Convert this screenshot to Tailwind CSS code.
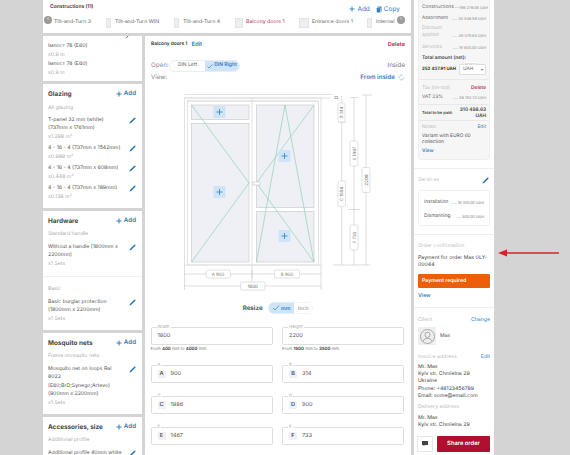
<!DOCTYPE html>
<html>
<head>
<meta charset="utf-8">
<script src="https://cdn.jsdelivr.net/npm/@tailwindcss/browser@4"></script>
</head>
<body class="m-0">
<div class="relative flex w-[570px] h-[455px] overflow-hidden bg-[#d4d4d4] font-['Inter',sans-serif] text-[#555] [text-rendering:geometricPrecision]">
  <!-- middle block -->
  <div class="ml-[43px] w-[368px] h-full flex flex-col gap-[3px] shrink-0">
    <!-- constructions bar -->
    <div class="relative h-[33px] shrink-0 bg-white">
      <div class="flex items-start justify-between pl-[7px] pr-[11px] pt-[4px] h-[17px]">
        <span class="text-[5px] leading-[6px] font-semibold text-[#333]">Constructions (11)</span>
        <div class="flex items-center gap-[6px] mt-[1px] text-[6.5px] leading-[8px] text-[#2f7fbf]">
          <span class="flex items-center gap-[2px]"><svg width="6" height="6" viewBox="0 0 6 6"><path d="M3 .5v5M.5 3h5" stroke="#2f7fbf" stroke-width=".9"/></svg>Add</span>
          <span class="flex items-center gap-[2px]"><svg width="6" height="7" viewBox="0 0 6 7"><rect x="1.5" y="0.5" width="4" height="5" rx=".6" fill="#2f7fbf"/><rect x=".5" y="1.7" width="4" height="5" rx=".6" fill="#2f7fbf" stroke="#fff" stroke-width=".5"/></svg>Copy</span>
        </div>
      </div>
      <div class="flex items-center h-[12px] pl-[11px] text-[5.2px] text-[#666] whitespace-nowrap overflow-hidden w-[364px]">
        <span class="w-[36px] shrink-0">Tilt-and-Turn 3</span>
        <span class="ml-[16px] w-[5px] h-[10px] shrink-0 bg-[#eceef2] border border-[#e2e4e8]"></span>
        <span class="ml-[4px] w-[43px] shrink-0">Tilt-and-Turn WIN</span>
        <span class="ml-[16px] w-[5px] h-[10px] shrink-0 bg-[#eceef2] border border-[#e2e4e8]"></span>
        <span class="ml-[4px] w-[36px] shrink-0">Tilt-and-Turn 4</span>
        <span class="ml-[16px] w-[8px] h-[10px] shrink-0 bg-[#eceef2] border border-[#e2e4e8]"></span>
        <span class="ml-[3px] w-[37px] shrink-0 text-[#b5304f]">Balcony doors 1</span>
        <span class="ml-[16px] w-[10px] h-[10px] shrink-0 bg-[#eceef2] border border-[#e2e4e8]"></span>
        <span class="ml-[3px] w-[40px] shrink-0">Entrance doors 1</span>
        <span class="ml-[15px] w-[5px] h-[10px] shrink-0 bg-[#eceef2] border border-[#e2e4e8]"></span>
        <span class="ml-[4px] shrink-0">Internal</span>
      </div>
      <span class="absolute left-[1px] top-[16px] w-[8px] h-[8px] rounded-full bg-[#9a9a9a] text-white text-[5px] flex items-center justify-center">‹</span>
      <span class="absolute left-[354px] top-[16px] w-[8px] h-[8px] rounded-full bg-[#9a9a9a] text-white text-[5px] flex items-center justify-center">›</span>
    </div>
    <div class="flex gap-[3px] flex-1 min-h-0">
      <!-- left column -->
      <div class="w-[99px] shrink-0 flex flex-col gap-[3px] text-[5.2px] leading-[8.5px] overflow-hidden">
        <div class="h-[45px] shrink-0 bg-white px-[5px] pt-[6px] relative">
          <svg class="absolute right-[11px] top-[-3px]" width="6" height="6" viewBox="0 0 6 6"><path d="M5.5 1 1.5 5 .5 5.5 1 4.500 5 .5z" fill="#1f6fb2"/></svg>
          <div>Імпост 78 (E60)</div>
          <div class="text-[#aaa]">x0.9 m</div>
          <div class="mt-[1px]">Імпост 78 (E60)</div>
          <div class="text-[#aaa]">x0.9 m</div>
        </div>

        <div class="h-[124px] shrink-0 bg-white px-[5px] pt-[5px]">
          <div class="flex items-center justify-between h-[10px] pr-[1px]">
            <span class="text-[6.4px] font-bold text-[#444]">Glazing</span>
            <span class="flex items-center gap-[2px] text-[6.2px] font-semibold text-[#2f7fbf]"><svg width="6" height="6" viewBox="0 0 6 6"><path d="M3 .5v5M.5 3h5" stroke="#2f7fbf" stroke-width="1"/></svg>Add</span>
          </div>
          <div class="mt-[5px] text-[#aaa]">All glazing</div>
          <div class="mt-[3px] flex justify-between"><div>T-panel 32 mm (white)<br>(737mm x 1761mm)<br><span class="text-[#aaa]">x1.298 m²</span></div><svg class="mt-[1px] mr-[1px] shrink-0" width="7" height="7" viewBox="0 0 7 7"><path d="M6.300 1.700 2 6 .5 6.500 1 5 5.300.7q.5-.3 1 0t0 1z" fill="#1f6fb2"/></svg></div>
          <div class="mt-[3px] flex justify-between"><div>4 - 16 - 4 (737mm x 1542mm)<br><span class="text-[#aaa]">x0.989 m²</span></div><svg class="mt-[1px] mr-[1px] shrink-0" width="7" height="7" viewBox="0 0 7 7"><path d="M6.300 1.700 2 6 .5 6.500 1 5 5.300.7q.5-.3 1 0t0 1z" fill="#1f6fb2"/></svg></div>
          <div class="mt-[3px] flex justify-between"><div>4 - 16 - 4 (737mm x 608mm)<br><span class="text-[#aaa]">x0.448 m²</span></div><svg class="mt-[1px] mr-[1px] shrink-0" width="7" height="7" viewBox="0 0 7 7"><path d="M6.300 1.700 2 6 .5 6.500 1 5 5.300.7q.5-.3 1 0t0 1z" fill="#1f6fb2"/></svg></div>
          <div class="mt-[3px] flex justify-between"><div>4 - 16 - 4 (737mm x 189mm)<br><span class="text-[#aaa]">x0.139 m²</span></div><svg class="mt-[1px] mr-[1px] shrink-0" width="7" height="7" viewBox="0 0 7 7"><path d="M6.300 1.700 2 6 .5 6.500 1 5 5.300.7q.5-.3 1 0t0 1z" fill="#1f6fb2"/></svg></div>
        </div>

        <div class="h-[119px] shrink-0 bg-white px-[5px] pt-[5px]">
          <div class="flex items-center justify-between h-[10px] pr-[1px]">
            <span class="text-[6.4px] font-bold text-[#444]">Hardware</span>
            <span class="flex items-center gap-[2px] text-[6.2px] font-semibold text-[#2f7fbf]"><svg width="6" height="6" viewBox="0 0 6 6"><path d="M3 .5v5M.5 3h5" stroke="#2f7fbf" stroke-width="1"/></svg>Add</span>
          </div>
          <div class="mt-[4px] text-[#aaa]">Standard handle</div>
          <div class="mt-[4px] flex justify-between"><div class="whitespace-nowrap">Without a handle (1800mm x<br>2200mm)<br><span class="text-[#aaa]">x1 Sets</span></div><svg class="mt-[1px] mr-[1px] shrink-0" width="7" height="7" viewBox="0 0 7 7"><path d="M6.300 1.700 2 6 .5 6.500 1 5 5.300.7q.5-.3 1 0t0 1z" fill="#1f6fb2"/></svg></div>
          <div class="-mx-[5px] h-px bg-[#f1f1f1] mt-[8px]"></div>
          <div class="mt-[8px] text-[#aaa]">Basic</div>
          <div class="mt-[4px] flex justify-between"><div class="whitespace-nowrap">Basic burglar protection<br>(1800mm x 2200mm)<br><span class="text-[#aaa]">x1 Sets</span></div><svg class="mt-[1px] mr-[1px] shrink-0" width="7" height="7" viewBox="0 0 7 7"><path d="M6.300 1.700 2 6 .5 6.500 1 5 5.300.7q.5-.3 1 0t0 1z" fill="#1f6fb2"/></svg></div>
        </div>

        <div class="h-[81px] shrink-0 bg-white px-[5px] pt-[5px]">
          <div class="flex items-center justify-between h-[10px] pr-[1px]">
            <span class="text-[6.4px] font-bold text-[#444]">Mosquito nets</span>
            <span class="flex items-center gap-[2px] text-[6.2px] font-semibold text-[#2f7fbf]"><svg width="6" height="6" viewBox="0 0 6 6"><path d="M3 .5v5M.5 3h5" stroke="#2f7fbf" stroke-width="1"/></svg>Add</span>
          </div>
          <div class="mt-[4px] text-[#aaa]">Frame mosquito nets</div>
          <div class="mt-[4px] flex justify-between"><div class="whitespace-nowrap">Mosquito net on loops Ral<br>8022<br>(E60;BrD;Synego;Artevo)<br>(900mm x 2200mm)<br><span class="text-[#aaa]">x1 Sets</span></div><svg class="mt-[1px] mr-[1px] shrink-0" width="7" height="7" viewBox="0 0 7 7"><path d="M6.300 1.700 2 6 .5 6.500 1 5 5.300.7q.5-.3 1 0t0 1z" fill="#1f6fb2"/></svg></div>
        </div>

        <div class="h-[60px] shrink-0 bg-white px-[5px] pt-[5px]">
          <div class="flex items-center justify-between h-[10px] pr-[1px]">
            <span class="text-[6.4px] font-bold text-[#444]">Accessories, size</span>
            <span class="flex items-center gap-[2px] text-[6.2px] font-semibold text-[#2f7fbf]"><svg width="6" height="6" viewBox="0 0 6 6"><path d="M3 .5v5M.5 3h5" stroke="#2f7fbf" stroke-width="1"/></svg>Add</span>
          </div>
          <div class="mt-[4px] text-[#aaa]">Additional profile</div>
          <div class="mt-[4px] flex justify-between"><div class="whitespace-nowrap">Additional profile 40mm white</div><svg class="mt-[1px] mr-[1px] shrink-0" width="7" height="7" viewBox="0 0 7 7"><path d="M6.300 1.700 2 6 .5 6.500 1 5 5.300.7q.5-.3 1 0t0 1z" fill="#1f6fb2"/></svg></div>
        </div>
      </div>

      <!-- main panel -->
      <div class="flex-1 min-w-0 bg-white">
        <div class="flex items-center justify-between h-[18px] px-[6px]">
          <span class="flex items-center gap-[4px] text-[4.8px] font-semibold text-[#333]">Balcony doors 1 <span class="text-[5.8px] font-semibold text-[#2f7fbf]">Edit</span></span>
          <span class="text-[5.6px] font-semibold text-[#b5304f]">Delete</span>
        </div>
        <div class="flex items-center justify-between h-[12px] mt-[6px] px-[6px] text-[6.2px] text-[#888]">
          <span class="flex items-center gap-[2px]"><span class="w-[16px]">Open:</span>
            <span class="flex h-[12px] w-[71px] rounded-full border border-[#e8eef4] text-[5px]">
              <span class="w-[35px] flex items-center justify-center text-[#666]">DIN Left</span>
              <span class="flex-1 rounded-r-full bg-[#cfe4f7] flex items-center justify-center gap-[1px] text-[#2f7fbf] font-semibold"><svg width="6" height="5" viewBox="0 0 6 5"><path d="M.5 2.500 2 4 5.500.5" fill="none" stroke="#2f7fbf" stroke-width=".7"/></svg>DIN Right</span>
            </span>
          </span>
          <span class="text-[#777]">Inside</span>
        </div>
        <div class="flex items-center justify-between h-[12px] px-[6px] text-[6.2px] text-[#888]">
          <span>View:</span>
          <span class="flex items-center gap-[3px] text-[#2f7fbf] font-semibold">From inside <svg width="7" height="7" viewBox="0 0 7 7"><path d="M6 3.500A2.500 2.500 0 1 1 5 1.500" fill="none" stroke="#7fb2d9" stroke-width=".6"/></svg></span>
        </div>

        <svg class="block" width="266" height="236" viewBox="145 84 266 236" font-family="Inter,sans-serif" text-rendering="geometricPrecision">
          <g fill="none" stroke="#d6d6d6" stroke-width=".7">
            <path d="M184.500 94.500H333M184.500 98H330M187.500 101H318.500M252 98v192"/>
            <rect x="184.500" y="98" width="136.500" height="167"/>
            <rect x="187.500" y="101" width="131" height="164"/>
          </g>
          <g fill="#eef0f6" stroke="#cccccc" stroke-width=".7">
            <rect x="191.500" y="105" width="57.500" height="14.500"/>
            <rect x="191.500" y="123.500" width="57.500" height="138.500"/>
            <rect x="256.500" y="105" width="57.500" height="102.500"/>
            <rect x="256.500" y="211.500" width="57.500" height="50.500"/>
          </g>
          <g fill="none" stroke="#8fd1b3" stroke-width=".7">
            <path d="M191.500 105 249 183 191.500 262"/>
            <path d="M314 105 256.500 183 314 262"/>
            <path d="M256.500 262 285 105 314 262"/>
          </g>
          <rect x="253" y="182" width="7" height="3" fill="#fff" stroke="#bbb" stroke-width=".5"/>
          <g fill="#cfe4f7">
            <rect x="213.500" y="106" width="12" height="12" rx="1"/>
            <rect x="213.500" y="186" width="12" height="12" rx="1"/>
            <rect x="278.500" y="150" width="12" height="12" rx="1"/>
            <rect x="278.500" y="230" width="12" height="12" rx="1"/>
          </g>
          <g stroke="#2f7fbf" stroke-width=".8">
            <path d="M216.500 112h6M219.500 109v6M216.500 192h6M219.500 189v6M281.500 156h6M284.500 153v6M281.500 236h6M284.500 233v6"/>
          </g>
          <g fill="none" stroke="#c8c8c8" stroke-width=".6">
            <path d="M341.700 96V265M354 97V265M366 95V265M333 265H370M348 209.500H360M338 122H346M350 97.500H358M362 95H372"/>
            <path d="M184.500 265V290M321 265V290M184.500 274H321M184.500 286H321M252 270V278"/>
          </g>
          <g fill="#fff" stroke="#cfcfcf" stroke-width=".6">
            <rect x="338" y="103" width="7" height="19" rx="1.500"/>
            <rect x="338" y="181" width="7.500" height="25.500" rx="1.500"/>
            <rect x="350" y="141" width="8" height="25" rx="1.500"/>
            <rect x="350" y="225" width="8" height="25" rx="1.500"/>
            <rect x="362" y="167.500" width="8" height="25" rx="1.500"/>
            <rect x="206" y="270" width="24.500" height="8" rx="1.500"/>
            <rect x="274.500" y="270" width="25" height="8" rx="1.500"/>
            <rect x="240.500" y="282" width="24.500" height="8" rx="1.500"/>
          </g>
          <g font-size="4.400" fill="#777" text-anchor="middle">
            <text x="218" y="275.600">A 900</text>
            <text x="287" y="275.600">B 900</text>
            <text x="252.700" y="287.600" fill="#555">1800</text>
            <text transform="translate(343.200 112.500) rotate(-90)">B 314</text>
            <text transform="translate(343.300 194) rotate(-90)">C 1886</text>
            <text transform="translate(355.600 153.500) rotate(-90)">E 1467</text>
            <text transform="translate(355.600 237.500) rotate(-90)">F 733</text>
            <text transform="translate(367.600 180) rotate(-90)" fill="#555">2200</text>
            <text transform="translate(337.700 97.500) rotate(-90)" font-size="5">D</text>
          </g>
          <text x="242.700" y="310" font-size="6.200" font-weight="700" fill="#555">Resize</text>
          <rect x="268.500" y="302.500" width="44" height="11" rx="5.500" fill="#fff" stroke="#eaeef3" stroke-width=".6"/>
          <path d="M274 302.500H294V313.500H274a5.500 5.500 0 0 1 0-11z" fill="#cfe4f7"/>
          <path d="M273 308 275 310 279 305.500" fill="none" stroke="#2f7fbf" stroke-width=".7"/>
          <text x="281" y="310" font-size="5.200" fill="#2f7fbf" font-weight="600">mm</text>
          <text x="298" y="310" font-size="5.200" fill="#777">Inch</text>
        </svg>

        <div class="ml-[5.500px] mt-[7.300px] w-[255px] grid grid-cols-[122px_122px] gap-x-[9.500px] text-[5.600px] text-[#555]">
          <div class="relative h-[18px] border border-[#ddd] rounded-[1.500px] flex items-center pl-[6px]">1800<span class="absolute left-[5px] top-[-3px] bg-white px-[1px] text-[4.400px] leading-[5px] text-[#aaa]">Width</span></div>
          <div class="relative h-[18px] border border-[#ddd] rounded-[1.500px] flex items-center pl-[6px]">2200<span class="absolute left-[5px] top-[-3px] bg-white px-[1px] text-[4.400px] leading-[5px] text-[#aaa]">Height</span></div>
          <div class="text-[4.300px] leading-[5px] mt-[2px] h-[18px] text-[#777]">From <b class="text-[#444]">400</b> mm to <b class="text-[#444]">4000</b> mm</div>
          <div class="text-[4.300px] leading-[5px] mt-[2px] h-[18px] text-[#777]">From <b class="text-[#444]">1500</b> mm to <b class="text-[#444]">3500</b> mm</div>
          <div class="relative h-[18px] border border-[#ddd] rounded-[1.500px] flex items-center pl-[6px] gap-[5px]"><span class="w-[8px] h-[8px] bg-[#f1f1f1] rounded-[1px] flex items-center justify-center font-semibold">A</span>900<span class="absolute left-[5px] top-[-3px] bg-white px-[1px] text-[4.400px] leading-[5px] text-[#aaa]">A</span></div>
          <div class="relative h-[18px] border border-[#ddd] rounded-[1.500px] flex items-center pl-[6px] gap-[5px]"><span class="w-[8px] h-[8px] bg-[#f1f1f1] rounded-[1px] flex items-center justify-center font-semibold">B</span>314<span class="absolute left-[5px] top-[-3px] bg-white px-[1px] text-[4.400px] leading-[5px] text-[#aaa]">B</span></div>
          <div class="relative h-[18px] mt-[13px] border border-[#ddd] rounded-[1.500px] flex items-center pl-[6px] gap-[5px]"><span class="w-[8px] h-[8px] bg-[#f1f1f1] rounded-[1px] flex items-center justify-center font-semibold">C</span>1886<span class="absolute left-[5px] top-[-3px] bg-white px-[1px] text-[4.400px] leading-[5px] text-[#aaa]">C</span></div>
          <div class="relative h-[18px] mt-[13px] border border-[#ddd] rounded-[1.500px] flex items-center pl-[6px] gap-[5px]"><span class="w-[8px] h-[8px] bg-[#f1f1f1] rounded-[1px] flex items-center justify-center font-semibold">D</span>900<span class="absolute left-[5px] top-[-3px] bg-white px-[1px] text-[4.400px] leading-[5px] text-[#aaa]">D</span></div>
          <div class="relative h-[18px] mt-[13px] border border-[#ddd] rounded-[1.500px] flex items-center pl-[6px] gap-[5px]"><span class="w-[8px] h-[8px] bg-[#f1f1f1] rounded-[1px] flex items-center justify-center font-semibold">E</span>1467<span class="absolute left-[5px] top-[-3px] bg-white px-[1px] text-[4.400px] leading-[5px] text-[#aaa]">E</span></div>
          <div class="relative h-[18px] mt-[13px] border border-[#ddd] rounded-[1.500px] flex items-center pl-[6px] gap-[5px]"><span class="w-[8px] h-[8px] bg-[#f1f1f1] rounded-[1px] flex items-center justify-center font-semibold">F</span>733<span class="absolute left-[5px] top-[-3px] bg-white px-[1px] text-[4.400px] leading-[5px] text-[#aaa]">F</span></div>
        </div>
      </div>
    </div>
  </div>

  <!-- right panel -->
  <div class="relative ml-[3px] w-[80px] h-full shrink-0 bg-white text-[5.200px] leading-[7px]">
    <div class="mx-[4px] h-[160px] bg-[#f6f6f6] rounded-b-[4px] border border-t-0 border-[#eee] px-[3px] pt-[3px] text-[4.800px] whitespace-nowrap">
      <div class="flex items-center h-[8px]"><span class="text-[#666]">Constructions ...</span><span class="ml-auto text-[3.800px] text-[#888]">198 278.06 UAH</span></div>
      <div class="flex items-center h-[8px] mt-[3px]"><span class="text-[#666]">Assortment</span><span class="ml-auto text-[3.800px] text-[#888]">..... 35 558.98 UAH</span></div>
      <div class="flex items-end h-[14px] mt-[3px]"><span class="text-[#bbb]">Discount<br>applied</span><span class="ml-auto text-[3.800px] text-[#888]">..... 49 379.65 UAH</span></div>
      <div class="flex items-center h-[8px] mt-[4px]"><span class="text-[#bbb]">Services</span><span class="ml-auto text-[3.800px] text-[#888]">..... 19 600.00 UAH</span></div>
      <div class="mt-[4px] h-[8px] font-semibold text-[#444]">Total amount (net):</div>
      <div class="flex items-center justify-between h-[12px]">
        <span class="text-[4.400px] font-bold text-[#333]">252 437.91 UAH</span>
        <span class="relative flex items-center justify-between w-[27px] h-[11px] shrink-0 border border-[#ddd] rounded-[1px] bg-white pl-[3px] pr-[2px] text-[#666]">UAH<span class="text-[4px]">▾</span><span class="absolute left-[2px] top-[-3px] text-[3.500px] leading-[4px] bg-white text-[#aaa]">Currency</span></span>
      </div>
      <div class="-mx-[3px] mt-[4px] h-px bg-[#e8e8e8]"></div>
      <div class="flex items-center justify-between h-[8px] mt-[4px]"><span class="text-[#bbb]">Tax (on-top)</span><span class="font-semibold text-[#b5304f]">Delete</span></div>
      <div class="flex items-center h-[8px] mt-[1px]"><span class="text-[#666]">VAT 23%</span><span class="ml-auto text-[3.800px] text-[#888]">..... 58 192.72 UAH</span></div>
      <div class="-mx-[3px] mt-[3px] h-px bg-[#e8e8e8]"></div>
      <div class="flex items-center justify-between h-[14px] mt-[0.500px]"><span class="text-[4px] font-semibold text-[#444]">Total to be paid:</span><span class="text-right font-semibold text-[#444] leading-[6px]">310 498.63<br>UAH</span></div>
      <div class="-mx-[3px] mt-[0.500px] h-px bg-[#e8e8e8]"></div>
      <div class="flex items-center justify-between h-[8px] mt-[2px]"><span class="text-[#bbb]">Notes:</span><span class="text-[#2f7fbf]">Edit</span></div>
      <div class="mt-[2px] leading-[6px] text-[#555]">Variant with EURO 60<br>collection</div>
      <div class="mt-[3px] font-semibold text-[#2f7fbf]">View</div>
    </div>
    <div class="h-px bg-[#eee] mt-[8px]"></div>
    <div class="flex items-center justify-between px-[4px] h-[8px] mt-[7px]"><span class="text-[#bbb]">Services</span><svg class="mr-[1px]" width="7" height="7" viewBox="0 0 7 7"><path d="M6.300 1.700 2 6 .5 6.500 1 5 5.300.7q.5-.3 1 0t0 1z" fill="#1f6fb2"/></svg></div>
    <div class="mx-[4px] mt-[6px] h-[36px] border border-[#f1f1f1] rounded-[2px] px-[5px] pt-[8px] text-[4.800px] whitespace-nowrap">
      <div class="flex items-center h-[7px]"><span>Installation</span><span class="ml-auto text-[3.800px] text-[#777]">..... 19 100.00 UAH</span></div>
      <div class="flex items-center h-[7px] mt-[6.500px]"><span>Dismantling</span><span class="ml-auto text-[3.800px] text-[#777]">..... 500.00 UAH</span></div>
    </div>
    <div class="h-px bg-[#eee] mt-[8px]"></div>
    <div class="px-[4px] mt-[8px] text-[#bbb]">Order confirmation</div>
    <div class="px-[4px] mt-[5px] text-[#444] whitespace-nowrap">Payment for order Max 0LY-<br>00044</div>
    <div class="mx-[4px] mt-[5px] h-[14px] rounded-[1px] bg-[#ec5f0a] flex items-center pl-[4px] font-semibold text-white">Payment required</div>
    <div class="px-[4px] mt-[5px] font-semibold text-[#2f7fbf]">View</div>
    <div class="h-px bg-[#eee] mt-[7px]"></div>
    <div class="flex items-center justify-between px-[4px] mt-[8px] h-[8px]"><span class="text-[#bbb]">Client</span><span class="text-[#2f7fbf]">Change</span></div>
    <div class="flex items-center gap-[4px] px-[4px] mt-[3px]">
      <span class="w-[18px] h-[18px] bg-[#efefef] flex items-center justify-center"><svg width="15" height="15" viewBox="0 0 15 15" fill="none" stroke="#8a8a8a" stroke-width=".7"><circle cx="7.500" cy="7.500" r="7"/><circle cx="7.500" cy="5.800" r="2.600"/><path d="M3 12.200c1-2.200 2.500-2.700 4.500-2.700s3.500.5 4.500 2.700"/></svg></span>
      <span class="text-[#555]">Max</span>
    </div>
    <div class="flex items-center justify-between px-[4px] mt-[8px] h-[8px]"><span class="text-[#bbb]">Invoice address</span><span class="text-[#2f7fbf]">Edit</span></div>
    <div class="px-[4px] mt-[3px] text-[#444] leading-[7.200px] whitespace-nowrap">Mr. Max<br>Kyiv str. Chmielna 29<br>Ukraine<br>Phone: +48123456789<br>Email: some@email.com</div>
    <div class="px-[4px] mt-[4px] text-[#bbb]">Delivery address</div>
    <div class="px-[4px] mt-[4px] text-[#444] leading-[7.200px] whitespace-nowrap">Mr. Max<br>Kyiv str. Chmielna 29</div>
    <div class="absolute left-0 bottom-0 w-full h-[23px] bg-white flex items-center gap-[4px] pl-[3px] pr-[4px]">
      <span class="w-[16px] h-[16px] border border-[#e5e5e5] rounded-[1px] flex items-center justify-center"><svg width="6" height="5" viewBox="0 0 6 5"><path d="M0 0h6v4H3L1.500 5V4H0z" fill="#444"/></svg></span>
      <span class="flex-1 h-[16px] bg-[#b00f2f] rounded-[1px] flex items-center justify-center font-semibold text-white text-[5.800px]">Share order</span>
    </div>
  </div>

  <!-- annotation arrow -->
  <svg class="absolute left-[497px] top-[249px]" width="63" height="8" viewBox="0 0 63 8"><path d="M8 3.300H62v1.400H8z" fill="#d9202a"/><path d="M1 4 10 .5v7z" fill="#d9202a"/></svg>
</div>
</body>
</html>
